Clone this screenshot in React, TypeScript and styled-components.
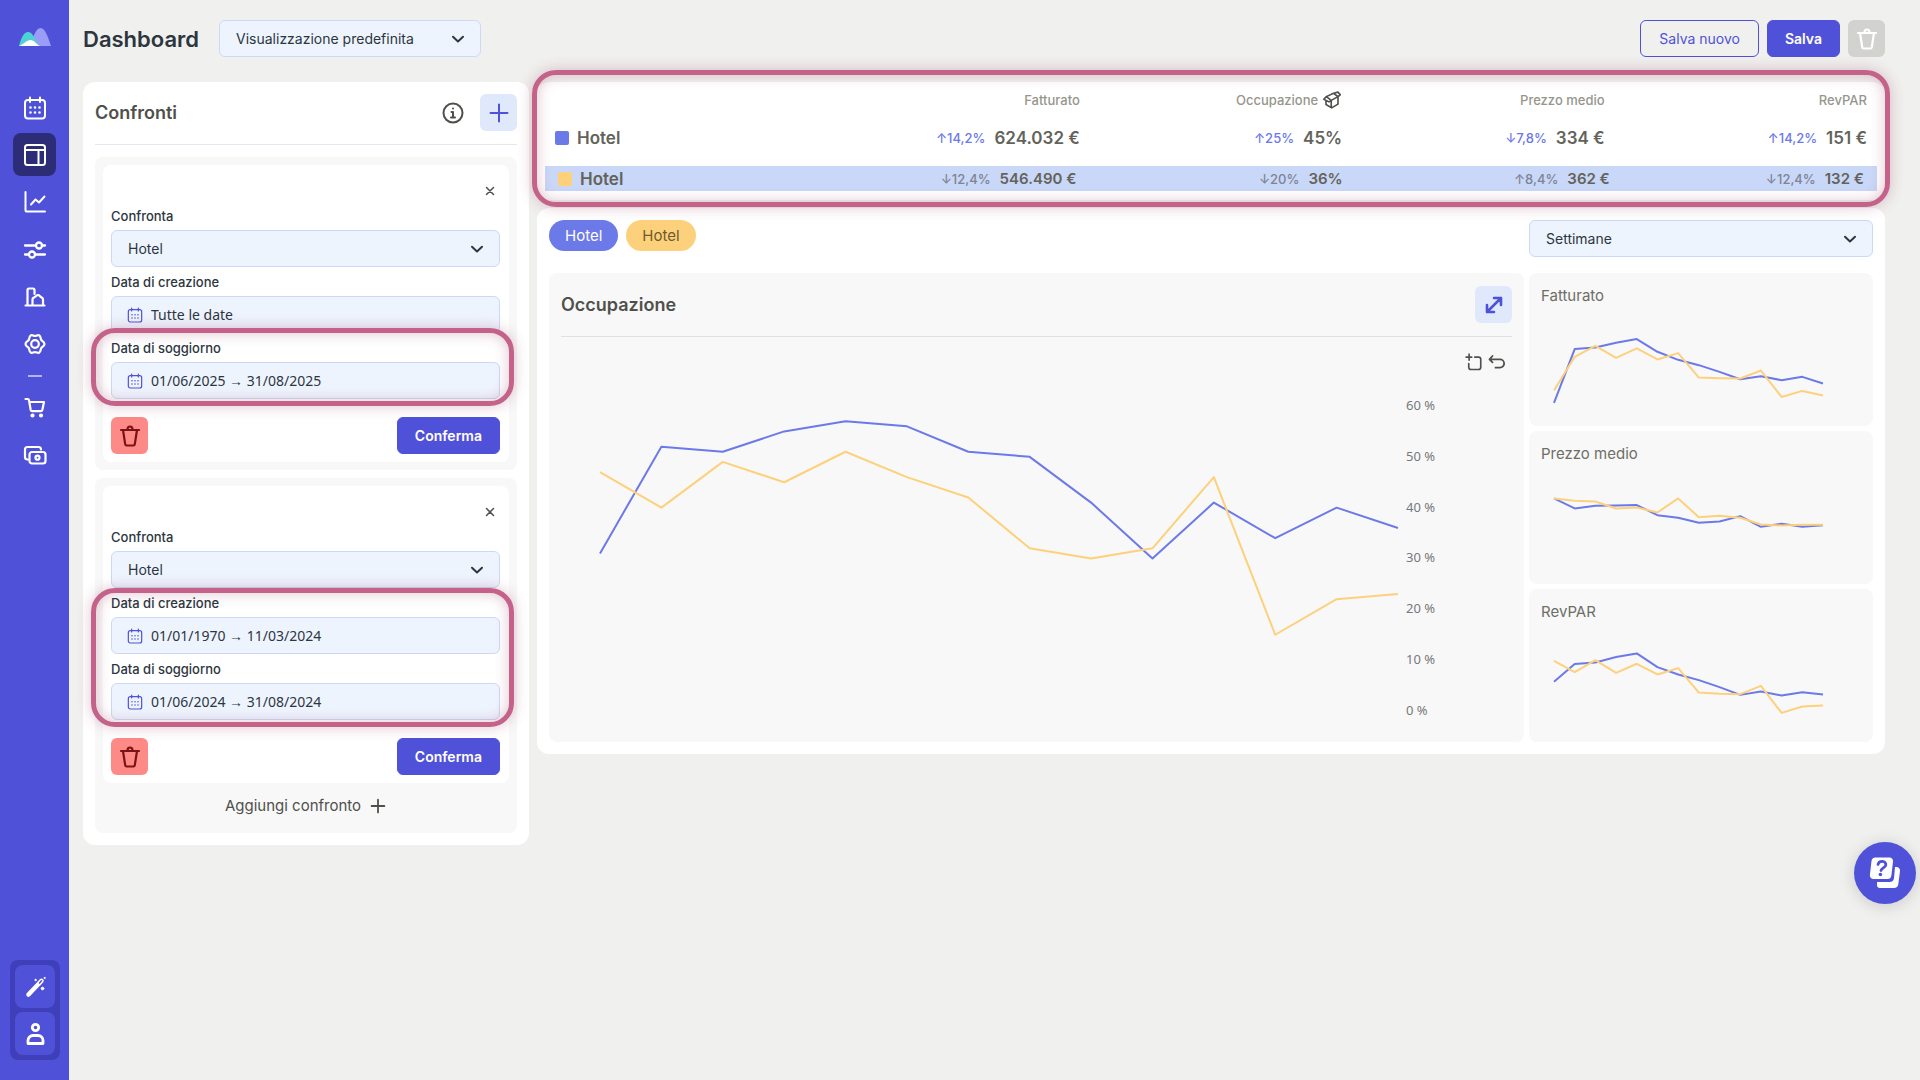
import React, { useId } from "react";
import styled, { createGlobalStyle, css } from "styled-components";

const color = {
  page: "#f0f0ee",
  brand: "#4f52d9",
  brandDark: "#2c2c77",
  brandDeep: "#3f40b9",
  field: "#eef4fe",
  fieldLine: "#cdd9f4",
  soft: "#dfe9fb",
  panel: "#f8f8f8",
  ink: "#2c363e",
  text: "#4f504c",
  muted: "#96968c",
  blue: "#6c79e8",
  yellow: "#fdd17c",
  mark: "#c5628a",
};

const GlobalStyle = createGlobalStyle`
  *, *::before, *::after { box-sizing: border-box; }
  body {
    margin: 0;
    background: ${color.page};
    color: ${color.text};
    font-family: Inter, "Noto Sans", "Liberation Sans", sans-serif;
    font-size: 15px;
  }
  button, input, select { font: inherit; color: inherit; }
  button { cursor: pointer; }
  h1, h2, h3, ul { margin: 0; padding: 0; }
  svg { display: block; flex: none; }
`;

/* ---------- icons ---------- */

type IconProps = { size?: number; stroke?: number };

const Glyph = styled.svg.attrs({
  viewBox: "0 0 24 24",
  fill: "none",
  stroke: "currentColor",
  strokeLinecap: "round",
  strokeLinejoin: "round",
  "aria-hidden": true,
})``;

const CalendarIcon = ({ size = 24, stroke = 2 }: IconProps) => (
  <Glyph width={size} height={size} strokeWidth={stroke}>
    <rect x="2" y="4" width="20" height="18.500" rx="3" />
    <path d="M7 1.500v4.500M17 1.500v4.500" />
    <path
      d="M7.500 11.500h.01M12 11.500h.01M16.500 11.500h.01M7.500 16.500h.01M12 16.500h.01M16.500 16.500h.01"
      strokeWidth={stroke * 1.3}
    />
  </Glyph>
);
const LayoutIcon = () => (
  <Glyph width={24} height={24} strokeWidth={2}>
    <rect x="2" y="2" width="20" height="20" rx="2.500" />
    <path d="M2 7h20M15.500 7v15" />
  </Glyph>
);
const ChartIcon = () => (
  <Glyph width={24} height={24} strokeWidth={2}>
    <path d="M2.500 2v18.500a1 1 0 0 0 1 1H22M8 14.500l4.500-5 3.500 3 5.500-6" />
  </Glyph>
);
const SlidersIcon = () => (
  <Glyph width={24} height={24} strokeWidth={2.3}>
    <path d="M2 7.500h11M19 7.500h3M2 16.500h4M12 16.500h10" />
    <circle cx="16" cy="7.500" r="3" />
    <circle cx="9" cy="16.500" r="3" />
  </Glyph>
);
const BuildingIcon = () => (
  <Glyph width={24} height={24} strokeWidth={2.2}>
    <path d="M2.500 20.500h19M4.500 20.500V5a1.500 1.500 0 0 1 1.500-1.500h4A1.500 1.500 0 0 1 11.500 5v4M9.500 20.500v-6a2 2 0 0 1 1-1.700l3.500-2.500a2 2 0 0 1 2 0l3 2.500a2 2 0 0 1 1 1.700v6" />
  </Glyph>
);
const GearIcon = () => (
  <Glyph width={24} height={24} strokeWidth={2.2}>
    <path d="M8 3.300c1.400-.7 2.200.6 4 .6s2.600-1.300 4-.6c2.200 1.200 1.300 3 2.200 4.600.8 1.300 3.300 1.600 3.300 4.100s-2.500 2.800-3.300 4.100c-.9 1.600 0 3.400-2.200 4.600-1.400.7-2.200-.6-4-.6s-2.600 1.300-4 .6c-2.200-1.200-1.300-3-2.200-4.600C5 14.800 2.500 14.500 2.500 12S5 9.200 5.800 7.900C6.700 6.300 5.800 4.500 8 3.300Z" />
    <circle cx="12" cy="12" r="3.800" />
  </Glyph>
);
const CartIcon = () => (
  <Glyph width={24} height={24} strokeWidth={2.2}>
    <path d="M2.500 3h2a1.500 1.500 0 0 1 1.500 1.200L7.700 14a1.500 1.500 0 0 0 1.500 1.200h8.600a1.500 1.500 0 0 0 1.500-1.200l1.700-8H6.500" />
    <circle cx="9.500" cy="19.500" r="1" fill="currentColor" />
    <circle cx="18" cy="19.500" r="1" fill="currentColor" />
  </Glyph>
);
const CashIcon = () => (
  <Glyph width={24} height={24} strokeWidth={2.2}>
    <rect x="6.500" y="9" width="16" height="11.500" rx="2.500" />
    <circle cx="14.500" cy="14.700" r="2" />
    <path d="M5 16.500h-.5a2.500 2.500 0 0 1-2.500-2.500V6.500A2.500 2.500 0 0 1 4.500 4h11A2.500 2.500 0 0 1 18 6.500" />
  </Glyph>
);
const WandIcon = () => (
  <Glyph width={24} height={24} strokeWidth={2}>
    <path d="M5.500 19.500L16 8.500" strokeWidth="4.500" />
    <path d="M16.500 8l2-2.200" strokeWidth="4.500" />
    <path d="M16.500 8l2-2.200" stroke={color.brand} strokeWidth="1.500" />
    <circle cx="12.500" cy="5" r=".7" fill="currentColor" strokeWidth="1" />
    <circle cx="21.500" cy="3" r=".6" fill="currentColor" strokeWidth="1" />
    <circle cx="19.500" cy="13.500" r="1.300" fill="currentColor" strokeWidth="1" />
  </Glyph>
);
const PersonIcon = () => (
  <Glyph width={24} height={24} strokeWidth={2.8}>
    <circle cx="12.500" cy="5.500" r="3.200" />
    <path d="M5 21.500v-3a5 5 0 0 1 5-5h5a5 5 0 0 1 5 5v3Z" />
  </Glyph>
);
const ChevronIcon = () => (
  <Glyph width={24} height={24} strokeWidth={2}>
    <path d="M7 9.800l5 4.700 5-4.700" />
  </Glyph>
);
const PlusIcon = ({ size = 24, stroke = 2 }: IconProps) => (
  <Glyph width={size} height={size} strokeWidth={stroke}>
    <path d="M12 3.500v17M3.500 12h17" />
  </Glyph>
);
const CloseIcon = () => (
  <Glyph width={12} height={12} strokeWidth={3}>
    <path d="M5 5l14 14M19 5L5 19" />
  </Glyph>
);
const InfoIcon = () => (
  <Glyph width={24} height={24} strokeWidth={2}>
    <circle cx="12" cy="12" r="9.500" />
    <path d="M10.500 11H12v5.500M10 16.500h4M12 7.500h.01" />
  </Glyph>
);
const TrashIcon = () => (
  <Glyph width={24} height={24} strokeWidth={2.2}>
    <path d="M3 6h18M5 6l2.200 14.200a1.500 1.500 0 0 0 1.500 1.300h6.600a1.500 1.500 0 0 0 1.500-1.300L19 6M9.500 5.500c0-4 5-4 5 0" />
  </Glyph>
);
const ExpandIcon = () => (
  <Glyph width={24} height={24} strokeWidth={2.6}>
    <path d="M5 19L19 5M12 5h7v7M5 12v7h7" />
  </Glyph>
);
const ZoomAreaIcon = () => (
  <Glyph width={18} height={18} strokeWidth={2.2}>
    <path d="M5.500 1.500v8M1.500 5.500h7.500M13 5.500h5a3 3 0 0 1 3 3V19a3 3 0 0 1-3 3H8a3 3 0 0 1-3-3v-5" />
  </Glyph>
);
const UndoIcon = () => (
  <Glyph width={18} height={18} strokeWidth={2.4}>
    <path d="M6 4L2 8.500l4 4M2.500 8.500H16a5.500 5.500 0 0 1 0 11h-6" />
  </Glyph>
);
const BoxIcon = () => (
  <Glyph width={20} height={18} strokeWidth={2.2}>
    <path d="M4.500 7.500L14 3l6 4.500-9 5ZM4.500 7.500L1 11l7 3.500 3-2M14 3l6-1.500 3 3.500-3 2.500M4 13v5l7.500 4.500 8.500-5V8M11 13v8.500" />
  </Glyph>
);
const HelpIcon = () => (
  <svg width="32" height="34" viewBox="0 0 32 34" aria-hidden="true">
    <path
      d="M26 11h1.500a3.500 3.500 0 0 1 3.500 4l-1.700 13.200a4.500 4.500 0 0 1-4.500 3.800H11a3 3 0 0 1-3-3v-3h12.500a4.500 4.500 0 0 0 4.500-4Z"
      fill="#fff"
    />
    <path
      d="M6.500 1.500h14a3.500 3.500 0 0 1 3.500 4l-1.600 14a4 4 0 0 1-4 3.500h-14a3.500 3.500 0 0 1-3.500-4l1.600-14a4 4 0 0 1 4-3.500Z"
      fill="#fff"
    />
    <path
      d="M9 8.500c1-4.500 8.500-4 7.800.5-.5 3-4.300 2.800-4.800 5.500"
      fill="none"
      stroke={color.brand}
      strokeWidth="2.800"
      strokeLinecap="round"
    />
    <circle cx="11.400" cy="18.500" r="1.800" fill={color.brand} />
  </svg>
);
const Logo = () => (
  <svg width="32" height="18" viewBox="0 0 32 18" role="img" aria-label="Logo">
    <path d="M11 18C14 9 17 0 21.500 0S29 9 32 18Z" fill="#9b9cf8" />
    <path d="M0 18C2 10 5 4 9 4s6 5 8 9l3 5Z" fill="#4fd3d2" />
    <path d="M0 18c5-2 8-6 11.500-6S17 16 21 18Z" fill="#fff" />
  </svg>
);

/* ---------- shell ---------- */

const Shell = styled.div`
  display: flex;
  min-height: 100vh;
`;

const Sidebar = styled.aside`
  display: flex;
  flex: 0 0 69px;
  flex-direction: column;
  align-items: center;
  padding: 28px 0 20px;
  background: ${color.brand};
  color: #fff;
`;

const NavList = styled.ul<{ $height: number }>`
  display: flex;
  flex-direction: column;
  justify-content: space-between;
  height: ${(p) => p.$height}px;
  list-style: none;
`;

const Nav = styled.nav`
  display: flex;
  flex-direction: column;
  align-items: center;
  gap: 9px;
  padding-top: 40px;
`;

const NavRule = styled.span`
  width: 14px;
  height: 2px;
  background: #b3b5f2;
`;

const NavLink = styled.a<{ $active?: boolean }>`
  display: grid;
  place-items: center;
  width: 43px;
  height: 43px;
  border-radius: 8px;
  color: #fff;
  background: ${(p) => (p.$active ? color.brandDark : "transparent")};
`;

const UserTools = styled.div`
  display: flex;
  flex-direction: column;
  gap: 4px;
  margin-top: auto;
  padding: 5px;
  border-radius: 8px;
  background: ${color.brandDeep};
`;

const UserButton = styled.button`
  display: grid;
  place-items: center;
  width: 40px;
  height: 43px;
  padding: 0;
  border: 0;
  border-radius: 8px;
  background: ${color.brand};
  color: #fff;
`;

const Main = styled.main`
  flex: 1;
  min-width: 0;
  padding: 20px 35px 20px 14px;
`;

const TopBar = styled.header`
  display: flex;
  align-items: center;
  justify-content: space-between;
  height: 37px;
  margin-bottom: 25px;
`;

const TopGroup = styled.div<{ $gap: number }>`
  display: flex;
  align-items: center;
  gap: ${(p) => p.$gap}px;
`;

const PageTitle = styled.h1`
  color: ${color.ink};
  font-size: 22px;
  font-weight: 600;
  line-height: 30px;
`;

const Columns = styled.div`
  display: flex;
  align-items: flex-start;
  gap: 8px;
`;

/* ---------- controls ---------- */

const Button = styled.button<{ $kind?: "outline" | "solid" }>`
  height: 37px;
  border: 1px solid ${color.brand};
  border-radius: 6px;
  font-size: 14px;
  ${(p) =>
    p.$kind === "outline"
      ? css`
          padding: 0 18px;
          background: transparent;
          color: ${color.brand};
          font-weight: 400;
        `
      : css`
          padding: 0 17px;
          background: ${color.brand};
          color: #fff;
          font-weight: 600;
        `}
`;

const tones = {
  soft: [color.soft, color.brand],
  danger: ["#fd8a86", "#7c1214"],
  off: ["#d2d2cf", "#ffffff"],
} as const;

const IconButton = styled.button<{ $tone: keyof typeof tones }>`
  display: grid;
  place-items: center;
  width: 37px;
  height: 37px;
  padding: 0;
  border: 0;
  border-radius: 6px;
  background: ${(p) => tones[p.$tone][0]};
  color: ${(p) => tones[p.$tone][1]};
`;

const PlainButton = styled.button`
  display: grid;
  place-items: center;
  padding: 0;
  border: 0;
  background: none;
  color: ${color.text};
`;

const SelectBox = styled.span<{ $width?: string }>`
  position: relative;
  display: block;
  width: ${(p) => p.$width ?? "100%"};
  color: ${color.ink};

  svg {
    position: absolute;
    top: 7px;
    right: 11px;
    pointer-events: none;
  }
`;

const SelectControl = styled.select`
  appearance: none;
  display: block;
  width: 100%;
  height: 37px;
  padding: 0 40px 0 16px;
  border: 1px solid ${color.fieldLine};
  border-radius: 6px;
  background: ${color.field};
  font-size: 14px;
`;

const FieldLabel = styled.label`
  display: block;
  padding-top: 2px;
  color: ${color.ink};
  font-size: 13px;
  font-weight: 500;
  line-height: 27px;
`;

const DateBox = styled.span`
  display: flex;
  align-items: center;
  gap: 8px;
  height: 37px;
  padding: 0 15px;
  border: 1px solid ${color.fieldLine};
  border-radius: 6px;
  background: ${color.field};
  color: ${color.brand};
`;

const DateInput = styled.input`
  flex: 1;
  min-width: 0;
  padding: 0;
  border: 0;
  outline: 0;
  background: none;
  color: ${color.ink};
  font-family: "Noto Sans", sans-serif;
  font-size: 14px;
`;

function Select({ value, label, width }: { value: string; label: string; width?: string }) {
  return (
    <SelectBox $width={width}>
      <SelectControl aria-label={label} defaultValue={value}>
        <option>{value}</option>
      </SelectControl>
      <ChevronIcon />
    </SelectBox>
  );
}

function SelectField({ label, value }: { label: string; value: string }) {
  const id = useId();
  return (
    <div>
      <FieldLabel htmlFor={id}>{label}</FieldLabel>
      <SelectBox>
        <SelectControl id={id} defaultValue={value}>
          <option>{value}</option>
        </SelectControl>
        <ChevronIcon />
      </SelectBox>
    </div>
  );
}

function DateField({ label, value }: { label: string; value: string }) {
  const id = useId();
  return (
    <div>
      <FieldLabel htmlFor={id}>{label}</FieldLabel>
      <DateBox>
        <CalendarIcon size={16} stroke={1.8} />
        <DateInput id={id} type="text" readOnly value={value} />
      </DateBox>
    </div>
  );
}

/* ---------- callout frames ---------- */

const Marked = styled.div`
  position: relative;
`;

const Frame = styled.div<{ $inset: string }>`
  position: absolute;
  inset: ${(p) => p.$inset};
  border: 5px solid ${color.mark};
  border-radius: 24px;
  box-shadow:
    0 0 14px rgba(150, 60, 95, 0.3),
    inset 0 0 14px rgba(150, 60, 95, 0.3);
  pointer-events: none;
`;

/* ---------- comparisons ---------- */

const Card = styled.section`
  border-radius: 12px;
  background: #fff;
`;

const Comparisons = styled(Card)`
  flex: 0 0 446px;
  padding: 12px;
`;

const CardHead = styled.div<{ $line: string }>`
  display: flex;
  align-items: center;
  gap: 15px;
  margin-bottom: 12px;
  padding-bottom: 13px;
  border-bottom: 1px solid ${(p) => p.$line};
`;

const CardTitle = styled.h2`
  flex: 1;
  font-size: 18px;
  font-weight: 600;
  line-height: 24px;
`;

const Stack = styled.div`
  display: flex;
  flex-direction: column;
  gap: 8px;
`;

const Group = styled.div`
  padding: 8px;
  border-radius: 8px;
  background: ${color.panel};
`;

const Form = styled.form`
  padding: 0 9px 8px 8px;
  border-radius: 8px;
  background: #fff;
`;

const CloseRow = styled.div`
  display: flex;
  justify-content: flex-end;
  padding: 20px 4px 4px;
`;

const Actions = styled.div`
  display: flex;
  justify-content: space-between;
  margin-top: 18px;
`;

const AddRow = styled.div`
  display: flex;
  justify-content: center;
  padding: 11px 0 7px;
`;

const AddButton = styled.button`
  display: flex;
  align-items: center;
  gap: 8px;
  padding: 0;
  border: 0;
  background: none;
  font-size: 15px;
  line-height: 24px;
`;

type Comparison = {
  created: string;
  stay: string;
  marksCreated: boolean;
};

const comparisons: Comparison[] = [
  { created: "Tutte le date", stay: "01/06/2025 → 31/08/2025", marksCreated: false },
  { created: "01/01/1970 → 11/03/2024", stay: "01/06/2024 → 31/08/2024", marksCreated: true },
];

function ComparisonForm({ item }: { item: Comparison }) {
  const created = <DateField label="Data di creazione" value={item.created} />;
  return (
    <Form onSubmit={(e) => e.preventDefault()}>
      <CloseRow>
        <PlainButton type="button" aria-label="Chiudi">
          <CloseIcon />
        </PlainButton>
      </CloseRow>
      <SelectField label="Confronta" value="Hotel" />
      {!item.marksCreated && created}
      <Marked>
        {item.marksCreated && created}
        <DateField label="Data di soggiorno" value={item.stay} />
        <Frame $inset={item.marksCreated ? "0 -14px -7px -20px" : "-5px -14px -7px -20px"} />
      </Marked>
      <Actions>
        <IconButton type="button" $tone="danger" aria-label="Elimina confronto">
          <TrashIcon />
        </IconButton>
        <Button type="submit">Conferma</Button>
      </Actions>
    </Form>
  );
}

/* ---------- summary ---------- */

const Results = styled.div`
  display: flex;
  flex: 1;
  flex-direction: column;
  gap: 8px;
  min-width: 0;
`;

const Summary = styled(Card)`
  position: relative;
  z-index: 1;
  padding-bottom: 9px;
`;

const Table = styled.table`
  display: block;
  thead, tbody { display: block; }
`;

const Row = styled.tr<{ $kind: "head" | "main" | "picked" }>`
  display: grid;
  grid-template-columns: repeat(5, 1fr);
  align-items: center;
  padding: 0 18px;
  height: ${(p) => (p.$kind === "head" ? 36 : 40)}px;
  ${(p) =>
    p.$kind === "picked" &&
    css`
      grid-template-columns: 259fr 259fr 266fr 267fr 254fr;
      height: 25px;
      margin: 8px 8px 0;
      padding: 0 13px;
      background: #c9d7f8;
    `}
`;

const HeadCell = styled.th`
  display: flex;
  align-items: center;
  justify-content: flex-end;
  gap: 4px;
  padding: 0;
  color: ${color.muted};
  font-size: 13px;
  font-weight: 500;

  svg { color: ${color.text}; }
`;

const NameCell = styled.th`
  display: flex;
  align-items: center;
  gap: 8px;
  padding: 0;
  color: #63635b;
  font-size: 17px;
  font-weight: 600;
`;

const Swatch = styled.span<{ $color: string }>`
  width: 14px;
  height: 14px;
  border-radius: 2px;
  background: ${(p) => p.$color};
`;

const ValueCell = styled.td<{ $picked?: boolean }>`
  display: flex;
  align-items: center;
  justify-content: flex-end;
  gap: 9px;
  padding: 0;
  color: #63635b;
  font-size: ${(p) => (p.$picked ? 15 : 17)}px;
  font-weight: 600;
`;

const Delta = styled.span<{ $picked?: boolean }>`
  color: ${(p) => (p.$picked ? "#7e8494" : color.blue)};
  font-size: 13px;
  font-weight: 500;
`;

const summaryRows = [
  {
    swatch: color.blue,
    values: [["↑14,2%", "624.032 €"], ["↑25%", "45%"], ["↓7,8%", "334 €"], ["↑14,2%", "151 €"]],
  },
  {
    swatch: color.yellow,
    values: [["↓12,4%", "546.490 €"], ["↓20%", "36%"], ["↑8,4%", "362 €"], ["↓12,4%", "132 €"]],
  },
];

/* ---------- charts ---------- */

const Detail = styled(Card)`
  padding: 12px;
`;

const DetailGrid = styled.div`
  display: grid;
  grid-template-columns: minmax(0, 1fr) minmax(0, 344px);
  gap: 0 5px;
`;

const Pills = styled.div`
  display: flex;
  gap: 8px;
  height: 53px;
`;

const Pill = styled.button<{ $bg: string; $fg: string }>`
  height: 31px;
  padding: 0 16px;
  border: 0;
  border-radius: 16px;
  background: ${(p) => p.$bg};
  color: ${(p) => p.$fg};
  font-size: 15px;
`;

const MainChart = styled.div`
  display: flex;
  flex-direction: column;
  padding: 13px 12px 12px;
  border-radius: 8px;
  background: ${color.panel};
`;

const ChartTools = styled.div`
  display: flex;
  justify-content: flex-end;
  gap: 5px;
  padding: 4px 6px 0 0;
`;

const Plot = styled.div`
  display: flex;
  gap: 8px;
  padding: 25px 75px 8px 39px;
`;

const PlotArea = styled.div`
  flex: 1;
  min-width: 0;
  padding: 10px 0 8px;
`;

const Axis = styled.div`
  display: flex;
  flex-direction: column;
  justify-content: space-between;
  width: 31px;
  color: #77787a;
  font-family: "Noto Sans", sans-serif;
  font-size: 13px;
  line-height: 18px;
  white-space: nowrap;
`;

const LineSvg = styled.svg<{ $height: number }>`
  width: 100%;
  height: ${(p) => p.$height}px;
  overflow: visible;
`;

const MiniList = styled.div`
  display: grid;
  grid-template-rows: repeat(3, 1fr);
  gap: 5px;
`;

const MiniCard = styled.article`
  display: flex;
  flex-direction: column;
  justify-content: space-between;
  height: 153px;
  padding: 13px 0 0 12px;
  border-radius: 8px;
  background: ${color.panel};
`;

const MiniTitle = styled.h3`
  color: #6e6e67;
  font-size: 15px;
  font-weight: 400;
  line-height: 20px;
`;

const MiniPlot = styled.div`
  padding: 0 50px 0 13px;
`;

type Series = { blue: number[]; yellow: number[] };

const occupancy: Series = {
  blue: [31, 52, 51, 55, 57, 56, 51, 50, 41, 30, 41, 34, 40, 36],
  yellow: [47, 40, 49, 45, 51, 46, 42, 32, 30, 32, 46, 15, 22, 23],
};

const minis: { title: string; series: Series }[] = [
  {
    title: "Fatturato",
    series: {
      blue: [69, 230, 235, 249, 260, 222, 198, 182, 162, 140, 149, 137, 147, 127],
      yellow: [106, 207, 240, 204, 232, 199, 218, 145, 143, 142, 166, 87, 105, 91],
    },
  },
  {
    title: "Prezzo medio",
    series: {
      blue: [256, 226, 234, 235, 236, 206, 198, 183, 187, 203, 171, 180, 171, 176],
      yellow: [256, 249, 247, 226, 229, 214, 256, 200, 204, 198, 178, 175, 177, 177],
    },
  },
  {
    title: "RevPAR",
    series: {
      blue: [180, 233, 238, 254, 265, 224, 202, 185, 164, 141, 151, 139, 149, 142],
      yellow: [243, 209, 245, 207, 234, 202, 221, 148, 144, 143, 168, 87, 106, 109],
    },
  },
];

function Lines({ series, max, height, label }: { series: Series; max: number; height: number; label: string }) {
  const toPoints = (values: number[]) => values.map((v, i) => `${i},${max - v}`).join(" ");
  return (
    <LineSvg $height={height} viewBox={`0 0 13 ${max}`} preserveAspectRatio="none" role="img" aria-label={label}>
      {(["blue", "yellow"] as const).map((name) => (
        <polyline
          key={name}
          points={toPoints(series[name])}
          fill="none"
          stroke={name === "blue" ? color.blue : color.yellow}
          strokeWidth="2"
          strokeLinejoin="round"
          vectorEffect="non-scaling-stroke"
        />
      ))}
    </LineSvg>
  );
}

const HelpButton = styled.button`
  position: fixed;
  right: 4px;
  bottom: 176px;
  display: grid;
  place-items: center;
  width: 62px;
  height: 62px;
  padding: 0;
  border: 0;
  border-radius: 50%;
  background: ${color.brand};
  box-shadow: 0 2px 16px rgba(0, 0, 0, 0.16);
`;

const navMain = [
  { label: "Calendario", icon: <CalendarIcon /> },
  { label: "Dashboard", icon: <LayoutIcon />, active: true },
  { label: "Analisi", icon: <ChartIcon /> },
  { label: "Regole", icon: <SlidersIcon /> },
  { label: "Struttura", icon: <BuildingIcon /> },
  { label: "Impostazioni", icon: <GearIcon /> },
];

const navShop = [
  { label: "Acquisti", icon: <CartIcon /> },
  { label: "Pagamenti", icon: <CashIcon /> },
];

function NavItems({ items, height }: { items: { label: string; icon: React.ReactNode; active?: boolean }[]; height: number }) {
  return (
    <NavList $height={height}>
      {items.map((item) => (
        <li key={item.label}>
          <NavLink href="#" aria-label={item.label} $active={item.active}>
            {item.icon}
          </NavLink>
        </li>
      ))}
    </NavList>
  );
}

export default function App() {
  return (
    <>
      <GlobalStyle />
      <Shell>
        <Sidebar>
          <Logo />
          <Nav aria-label="Principale">
            <NavItems items={navMain} height={280} />
            <NavRule />
            <NavItems items={navShop} height={90} />
          </Nav>
          <UserTools>
            <UserButton aria-label="Assistente">
              <WandIcon />
            </UserButton>
            <UserButton aria-label="Profilo">
              <PersonIcon />
            </UserButton>
          </UserTools>
        </Sidebar>

        <Main>
          <TopBar>
            <TopGroup $gap={20}>
              <PageTitle>Dashboard</PageTitle>
              <Select label="Visualizzazione" value="Visualizzazione predefinita" width="262px" />
            </TopGroup>
            <TopGroup $gap={8}>
              <Button $kind="outline">Salva nuovo</Button>
              <Button>Salva</Button>
              <IconButton $tone="off" aria-label="Elimina visualizzazione">
                <TrashIcon />
              </IconButton>
            </TopGroup>
          </TopBar>

          <Columns>
            <Comparisons>
              <CardHead $line="#e4e7f0">
                <CardTitle>Confronti</CardTitle>
                <PlainButton aria-label="Informazioni">
                  <InfoIcon />
                </PlainButton>
                <IconButton $tone="soft" aria-label="Aggiungi">
                  <PlusIcon />
                </IconButton>
              </CardHead>
              <Stack>
                <Group>
                  <ComparisonForm item={comparisons[0]} />
                </Group>
                <Group>
                  <ComparisonForm item={comparisons[1]} />
                  <AddRow>
                    <AddButton>
                      Aggiungi confronto
                      <PlusIcon size={18} stroke={2.4} />
                    </AddButton>
                  </AddRow>
                </Group>
              </Stack>
            </Comparisons>

            <Results>
              <Summary>
                <Table>
                  <thead>
                    <Row $kind="head">
                      <td />
                      <HeadCell scope="col">Fatturato</HeadCell>
                      <HeadCell scope="col">
                        Occupazione
                        <BoxIcon />
                      </HeadCell>
                      <HeadCell scope="col">Prezzo medio</HeadCell>
                      <HeadCell scope="col">RevPAR</HeadCell>
                    </Row>
                  </thead>
                  <tbody>
                    {summaryRows.map((row, index) => (
                      <Row key={row.swatch} $kind={index ? "picked" : "main"}>
                        <NameCell scope="row">
                          <Swatch $color={row.swatch} />
                          Hotel
                        </NameCell>
                        {row.values.map(([delta, value]) => (
                          <ValueCell key={value} $picked={index > 0}>
                            <Delta $picked={index > 0}>{delta}</Delta>
                            {value}
                          </ValueCell>
                        ))}
                      </Row>
                    ))}
                  </tbody>
                </Table>
                <Frame $inset="-12px -5px -7px -5px" />
              </Summary>

              <Detail>
                <DetailGrid>
                  <Pills>
                    <Pill $bg={color.blue} $fg="#fff">Hotel</Pill>
                    <Pill $bg={color.yellow} $fg="#6f5a2a">Hotel</Pill>
                  </Pills>
                  <Select label="Periodo" value="Settimane" />
                  <MainChart>
                    <CardHead $line="#e0e0e0">
                      <CardTitle>Occupazione</CardTitle>
                      <IconButton $tone="soft" aria-label="Espandi">
                        <ExpandIcon />
                      </IconButton>
                    </CardHead>
                    <ChartTools>
                      <PlainButton aria-label="Zoom area">
                        <ZoomAreaIcon />
                      </PlainButton>
                      <PlainButton aria-label="Annulla zoom">
                        <UndoIcon />
                      </PlainButton>
                    </ChartTools>
                    <Plot>
                      <PlotArea>
                        <Lines series={occupancy} max={60} height={305} label="Occupazione per settimana" />
                      </PlotArea>
                      <Axis>
                        {[60, 50, 40, 30, 20, 10, 0].map((tick) => (
                          <span key={tick}>{tick} %</span>
                        ))}
                      </Axis>
                    </Plot>
                  </MainChart>
                  <MiniList>
                    {minis.map((mini) => (
                      <MiniCard key={mini.title}>
                        <MiniTitle>{mini.title}</MiniTitle>
                        <MiniPlot>
                          <Lines series={mini.series} max={350} height={117} label={mini.title} />
                        </MiniPlot>
                      </MiniCard>
                    ))}
                  </MiniList>
                </DetailGrid>
              </Detail>
            </Results>
          </Columns>
        </Main>
      </Shell>
      <HelpButton aria-label="Aiuto">
        <HelpIcon />
      </HelpButton>
    </>
  );
}
